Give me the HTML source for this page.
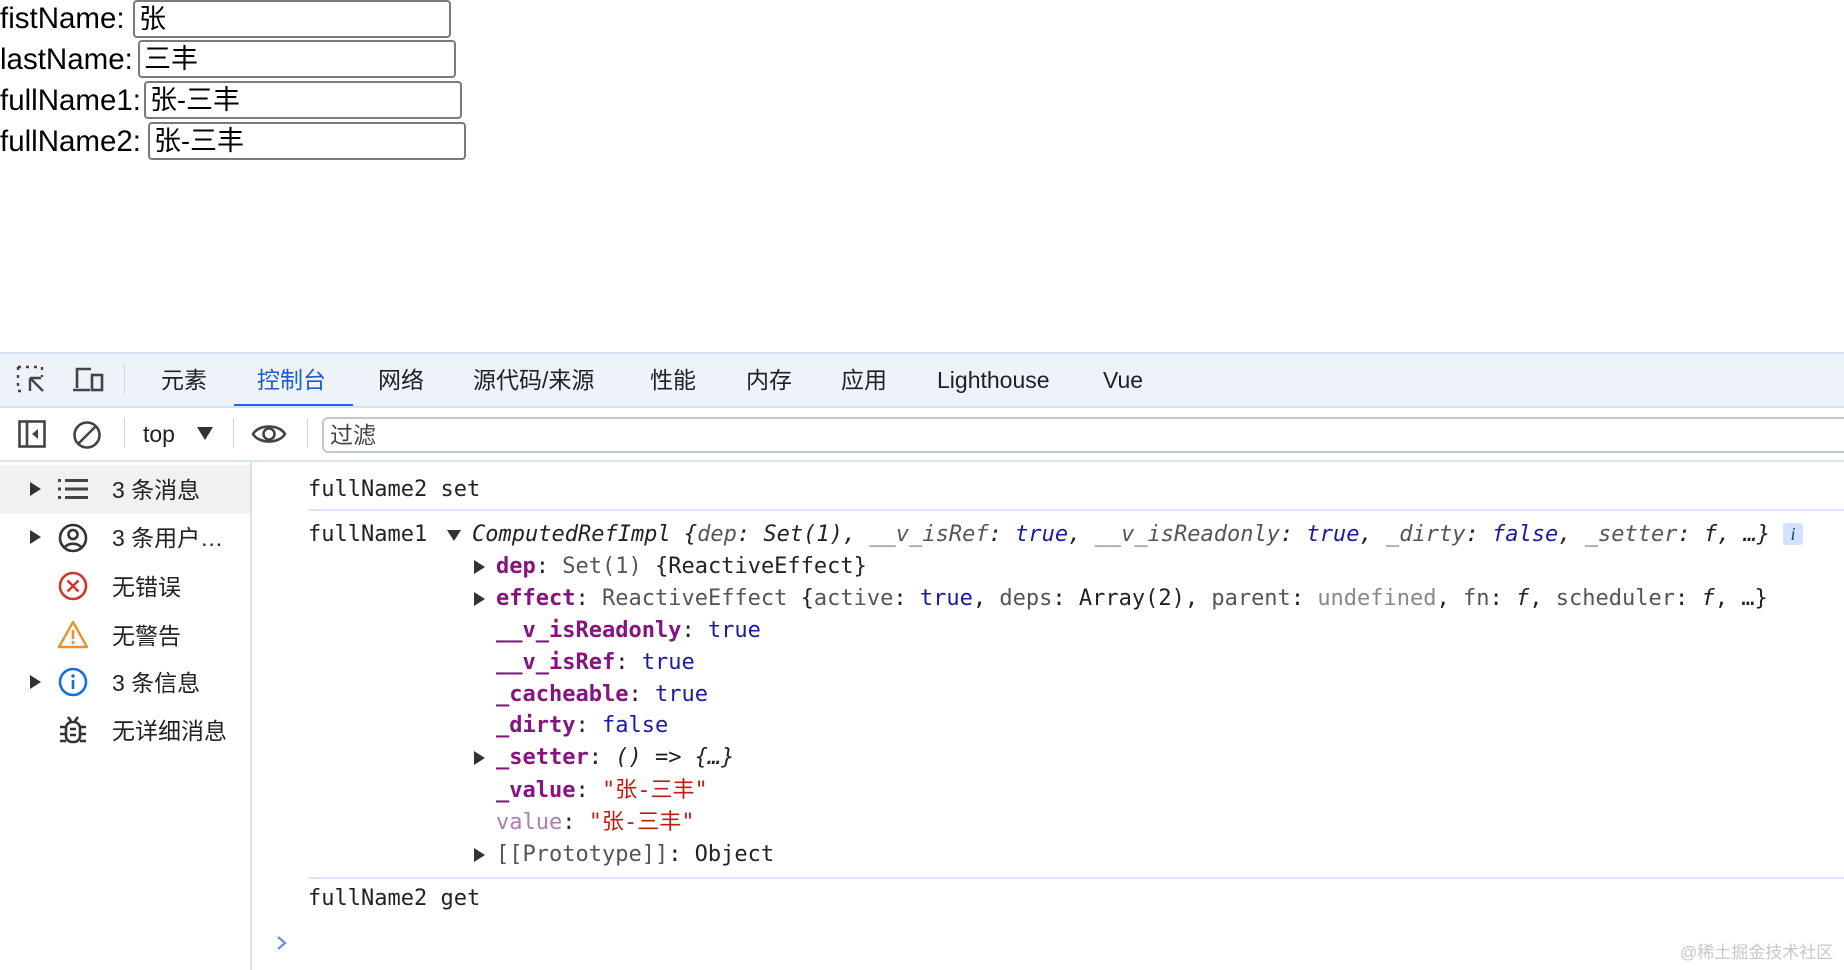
<!DOCTYPE html>
<html><head><meta charset="utf-8">
<style>
*{margin:0;padding:0;box-sizing:border-box}
body{width:1844px;height:970px;overflow:hidden;background:#fff;position:relative;font-family:"Liberation Sans","Noto Sans CJK SC",sans-serif;color:#000}
.a{position:absolute;white-space:nowrap}
.lbl{font-size:29.5px;line-height:38px}
.inp{position:absolute;border:2px solid #7a7a7a;border-radius:4px;height:38px;width:318px;font-size:27px;line-height:34px;padding-left:4px}
.tab{position:absolute;top:362px;font-size:23px;line-height:36px;color:#202124;font-family:"Liberation Sans","Noto Sans CJK SC",sans-serif}
.m{font-family:"DejaVu Sans Mono","Liberation Mono","Noto Sans CJK SC",monospace;font-size:22px;line-height:32px;height:32px;position:absolute;white-space:nowrap;color:#222}
.k{color:#881280;font-weight:bold}
.b{color:#1a1aa6}
.g{color:#555}
.lg{color:#888}
.s{color:#c41a16}
.i{font-style:italic}
.tri{position:absolute;width:0;height:0;border-top:7px solid transparent;border-bottom:7px solid transparent;border-left:11px solid #333}
.sb{position:absolute;left:112px;font-size:23px;line-height:32px;color:#202124}
</style></head><body>

<div class="a lbl" style="left:0;top:0">fistName:</div>
<div class="inp" style="left:133px;top:0">张</div>
<div class="a lbl" style="left:0;top:41px">lastName:</div>
<div class="inp" style="left:138px;top:40px">三丰</div>
<div class="a lbl" style="left:0;top:82px">fullName1:</div>
<div class="inp" style="left:144px;top:81px">张-三丰</div>
<div class="a lbl" style="left:0;top:123px">fullName2:</div>
<div class="inp" style="left:148px;top:122px">张-三丰</div>

<div class="a" style="left:0;top:352px;width:1844px;height:56px;background:#eef2f9;border-top:2px solid #d6e2f5"></div>
<svg class="a" style="left:16px;top:365px" width="32" height="30" viewBox="0 0 32 30"><g fill="none" stroke="#444" stroke-width="2.4"><path d="M2 2h4M10 2h4M18 2h4M2 2v4M2 10v4M2 18v4M2 26h4M26 2v4M26 10v2" stroke-dasharray="3 2"/><path d="M14 13v13M14 13h11M14 13l13 13"/></g></svg>
<svg class="a" style="left:73px;top:366px" width="32" height="28" viewBox="0 0 32 28"><g fill="none" stroke="#444" stroke-width="2.6"><path d="M4 22V3h14"/><path d="M0 24h17"/><rect x="19" y="9" width="10" height="15"/></g></svg>
<div class="a" style="left:124px;top:364px;width:1px;height:30px;background:#cfd6e2"></div>
<div class="tab" style="left:161px">元素</div>
<div class="tab" style="left:257px;color:#1a5fc8">控制台</div>
<div class="a" style="left:234px;top:404px;width:119px;height:4px;background:#1a6ed8"></div>
<div class="tab" style="left:378px">网络</div>
<div class="tab" style="left:473px">源代码/来源</div>
<div class="tab" style="left:650px">性能</div>
<div class="tab" style="left:746px">内存</div>
<div class="tab" style="left:841px">应用</div>
<div class="tab" style="left:937px">Lighthouse</div>
<div class="tab" style="left:1103px">Vue</div>

<div class="a" style="left:0;top:406px;width:1844px;height:2px;background:#d6e2f5"></div>
<div class="a" style="left:0;top:460px;width:1844px;height:2px;background:#d6e2f5"></div>
<svg class="a" style="left:18px;top:420px" width="28" height="28" viewBox="0 0 28 28"><rect x="1.5" y="1.5" width="25" height="25" fill="none" stroke="#444" stroke-width="2.6"/><path d="M9 2v24" stroke="#444" stroke-width="2.6"/><path d="M20 9l-6 5 6 5z" fill="#444"/></svg>
<svg class="a" style="left:72px;top:420px" width="30" height="30" viewBox="0 0 30 30"><circle cx="15" cy="15" r="12.5" fill="none" stroke="#444" stroke-width="2.6"/><path d="M6 24L24 6" stroke="#444" stroke-width="2.6"/></svg>
<div class="a" style="left:124px;top:418px;width:1px;height:30px;background:#cfd6e2"></div>
<div class="a" style="left:143px;top:418px;font-size:23px;line-height:32px;color:#202124">top</div>
<svg class="a" style="left:197px;top:427px" width="16" height="13"><path d="M0 0h16L8 13z" fill="#333"/></svg>
<div class="a" style="left:233px;top:418px;width:1px;height:30px;background:#cfd6e2"></div>
<svg class="a" style="left:251px;top:422px" width="36" height="24" viewBox="0 0 36 24"><path d="M2 12C8 2 28 2 34 12C28 22 8 22 2 12z" fill="none" stroke="#444" stroke-width="2.6"/><circle cx="18" cy="12" r="5.5" fill="none" stroke="#444" stroke-width="2.6"/></svg>
<div class="a" style="left:307px;top:418px;width:1px;height:30px;background:#cfd6e2"></div>
<div class="a" style="left:322px;top:417px;width:1540px;height:36px;border:2px solid #c4c7cc;border-radius:6px"></div>
<div class="a" style="left:330px;top:419px;font-size:23px;line-height:32px;color:#444">过滤</div>

<div class="a" style="left:250px;top:462px;width:2px;height:508px;background:#d6e2f5"></div>
<div class="a" style="left:0;top:465px;width:250px;height:49px;background:#f1f1f1"></div>
<div class="tri" style="left:30px;top:482px"></div>
<svg class="a" style="left:58px;top:478px" width="30" height="22"><g fill="#444"><rect x="0" y="1" width="3" height="3"/><rect x="0" y="9.5" width="3" height="3"/><rect x="0" y="18" width="3" height="3"/><rect x="7" y="1" width="23" height="3"/><rect x="7" y="9.5" width="23" height="3"/><rect x="7" y="18" width="23" height="3"/></g></svg>
<div class="sb" style="top:474px">3 条消息</div>
<div class="tri" style="left:30px;top:530px"></div>
<svg class="a" style="left:58px;top:523px" width="30" height="30" viewBox="0 0 30 30"><g fill="none" stroke="#333" stroke-width="2.6"><circle cx="15" cy="15" r="13"/><circle cx="15" cy="11.5" r="4.5"/><path d="M6.5 24.5c4-5 13-5 17 0"/></g></svg>
<div class="sb" style="top:522px">3 条用户…</div>
<svg class="a" style="left:58px;top:571px" width="30" height="30" viewBox="0 0 30 30"><g fill="none" stroke="#d0372e" stroke-width="2.6"><circle cx="15" cy="15" r="13"/><path d="M9.5 9.5l11 11M20.5 9.5l-11 11"/></g></svg>
<div class="sb" style="top:571px">无错误</div>
<svg class="a" style="left:57px;top:620px" width="32" height="29" viewBox="0 0 32 29"><path d="M16 2L30 27H2z" fill="none" stroke="#e0952f" stroke-width="2.4" stroke-linejoin="round"/><path d="M16 10v9" stroke="#e0952f" stroke-width="2.6"/><circle cx="16" cy="22.5" r="1.6" fill="#e0952f"/></svg>
<div class="sb" style="top:620px">无警告</div>
<div class="tri" style="left:30px;top:675px"></div>
<svg class="a" style="left:58px;top:667px" width="30" height="30" viewBox="0 0 30 30"><g fill="none" stroke="#1a6ed8" stroke-width="2.6"><circle cx="15" cy="15" r="13"/><path d="M15 13v9"/></g><circle cx="15" cy="9" r="1.7" fill="#1a6ed8"/></svg>
<div class="sb" style="top:667px">3 条信息</div>
<svg class="a" style="left:60px;top:715px" width="26" height="30" viewBox="0 0 26 30"><g fill="none" stroke="#333" stroke-width="2.6"><path d="M8 2l3 4M18 2l-3 4"/><rect x="6" y="7" width="14" height="20" rx="6"/><path d="M0 12h6M20 12h6M0 19h6M20 19h6M0 26h6M20 26h6M10 14h6M10 20h6"/></g></svg>
<div class="sb" style="top:715px">无详细消息</div>

<div class="m" style="left:308px;top:474px">fullName2 set</div>
<div class="a" style="left:308px;top:509px;width:1536px;height:2px;background:#dde6f5"></div>
<div class="m" style="left:308px;top:519px">fullName1</div>
<svg class="a" style="left:447px;top:530px" width="14" height="11"><path d="M0 0h14L7 11z" fill="#333"/></svg>
<div class="m i" style="left:472px;top:519px">ComputedRefImpl {<span class="g">dep</span>: Set(1), <span class="g">__v_isRef</span>: <span class="b">true</span>, <span class="g">__v_isReadonly</span>: <span class="b">true</span>, <span class="g">_dirty</span>: <span class="b">false</span>, <span class="g">_setter</span>: f, …}</div>
<div class="a" style="left:1783px;top:523px;width:20px;height:22px;background:#d3e3fd;border-radius:3px;font-family:'Liberation Serif',serif;font-style:italic;font-size:18px;line-height:22px;text-align:center;color:#1a3a8a">i</div>

<div class="tri" style="left:474px;top:560px"></div>
<div class="m" style="left:496px;top:551px"><span class="k">dep</span>: <span class="g">Set(1)</span> {ReactiveEffect}</div>
<div class="tri" style="left:474px;top:592px"></div>
<div class="m" style="left:496px;top:583px"><span class="k">effect</span>: <span class="g">ReactiveEffect</span> {<span class="g">active</span>: <span class="b">true</span>, <span class="g">deps</span>: Array(2), <span class="g">parent</span>: <span class="lg">undefined</span>, <span class="g">fn</span>: <i>f</i>, <span class="g">scheduler</span>: <i>f</i>, …}</div>
<div class="m" style="left:496px;top:615px"><span class="k">__v_isReadonly</span>: <span class="b">true</span></div>
<div class="m" style="left:496px;top:647px"><span class="k">__v_isRef</span>: <span class="b">true</span></div>
<div class="m" style="left:496px;top:679px"><span class="k">_cacheable</span>: <span class="b">true</span></div>
<div class="m" style="left:496px;top:710px"><span class="k">_dirty</span>: <span class="b">false</span></div>
<div class="tri" style="left:474px;top:751px"></div>
<div class="m" style="left:496px;top:742px"><span class="k">_setter</span>: <i>() =&gt; {…}</i></div>
<div class="m" style="left:496px;top:775px"><span class="k">_value</span>: <span class="s">"张-三丰"</span></div>
<div class="m" style="left:496px;top:807px"><span style="color:#b07db0">value</span>: <span class="s">"张-三丰"</span></div>
<div class="tri" style="left:474px;top:848px"></div>
<div class="m" style="left:496px;top:839px"><span class="g">[[Prototype]]</span>: Object</div>
<div class="a" style="left:308px;top:877px;width:1536px;height:2px;background:#dde6f5"></div>
<div class="m" style="left:308px;top:883px">fullName2 get</div>
<svg class="a" style="left:276px;top:935px" width="12" height="16"><path d="M2 2l7 6-7 6" fill="none" stroke="#6d93e0" stroke-width="2.4"/></svg>

<div class="a" style="left:1680px;top:941px;font-size:17px;line-height:24px;color:#c8c8c8">@稀土掘金技术社区</div>
</body></html>
